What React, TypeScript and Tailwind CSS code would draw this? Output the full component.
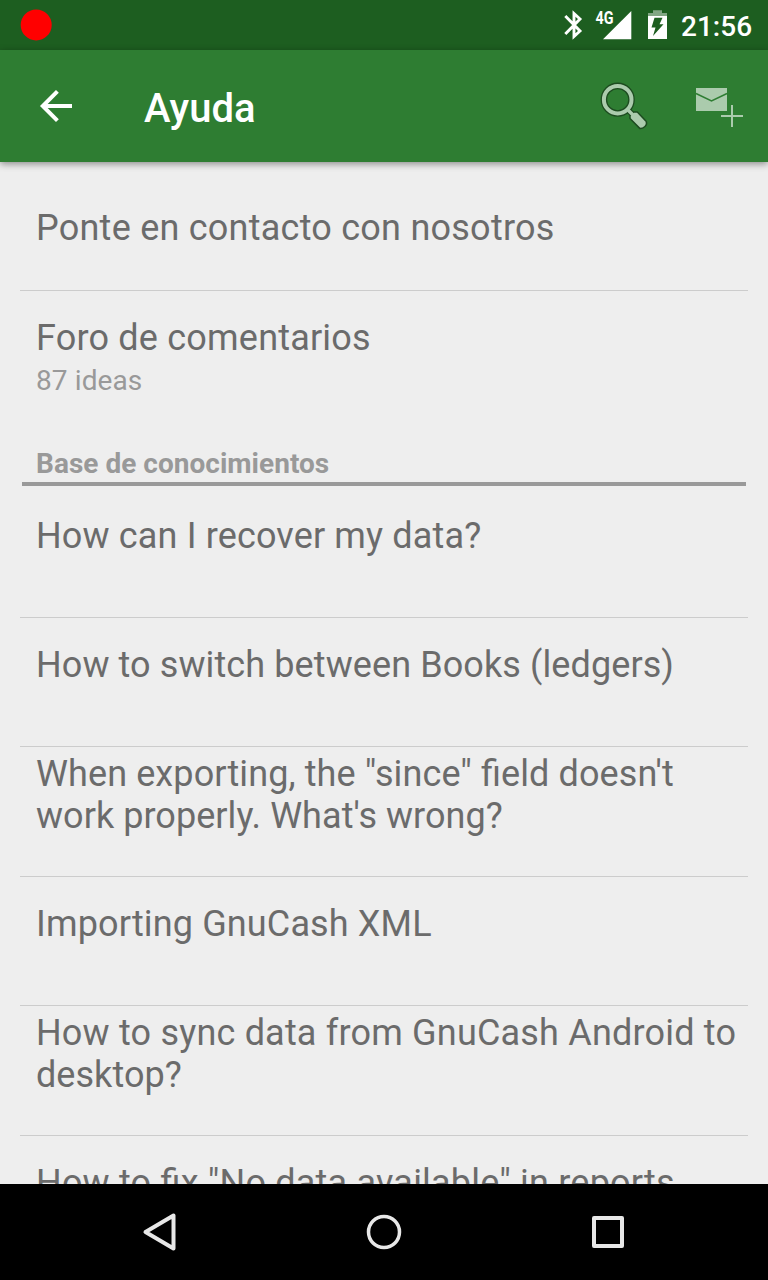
import type { ReactNode } from "react";

function StatusBar() {
  return (
    <div className="flex h-[50px] shrink-0 items-center bg-[#1d5e20] text-white">
      <svg className="ml-5 h-8 w-8" viewBox="0 0 32 32">
        <circle cx="16.200" cy="15.900" r="15.500" fill="#ff0000" />
      </svg>
      <div className="flex-1" />
      <svg className="h-[50px] w-[114px] shrink-0" viewBox="560 0 114 50">
        <path d="M565.300 16 580 31 574 36.500V13.500L580 19 565.300 34" fill="none" stroke="#fff" strokeWidth="2.900" />
        <text x="595.500" y="24" fill="#fff" fontFamily="Roboto, sans-serif" fontSize="17.500" fontWeight="700" textLength="18" lengthAdjust="spacingAndGlyphs">4G</text>
        <path d="M603 39.300 631.300 11V39.300Z" fill="#fff" />
        <path d="M653 10.300H662V13H667V16H648V13H653Z" fill="#fff" fillOpacity=".45" />
        <path d="M648 16H667V39H648Z" fill="#fff" />
        <path d="M654.500 17.800H662.500L659.500 24.200H663.500L653 36L655.500 27.500H651.500Z" fill="#1d5e20" />
      </svg>
      <div className="w-[94px] shrink-0 pl-[7px] pt-[3px] text-[28px] leading-8 font-medium">21:56</div>
    </div>
  );
}

function AppBar() {
  return (
    <header className="z-10 flex h-28 shrink-0 items-center bg-[#2e7d32] text-white shadow-[0_2px_7px_rgba(0,0,0,0.42)]">
      <svg className="ml-8 h-12 w-12" viewBox="0 0 48 48" fill="none" stroke="#fff" strokeWidth="4">
        <path d="M40 24H10M25.400 9.400 10.800 24l14.600 14.600" />
      </svg>
      <h1 className="ml-16 flex-1 pt-1.5 text-[40px] leading-[48px] font-medium">Ayuda</h1>
      <svg className="h-28 w-[188px]" viewBox="580 50 188 112">
        <g strokeLinecap="round" strokeLinejoin="round">
          <circle cx="617.700" cy="99.700" r="13.800" fill="none" stroke="#1d4c20" strokeWidth="6.600" />
          <path d="M627.500 109.500 632 114" stroke="#1d4c20" strokeWidth="6" />
          <path d="M630 115.700 633.800 112 637.300 112 646.300 121.500Q647.300 124.500 645 126.500T640 128.600L630 118.500Z" fill="#abcbad" stroke="#1d4c20" strokeWidth="1.500" />
          <circle cx="617.700" cy="99.700" r="13.800" fill="none" stroke="#abcbad" strokeWidth="4" />
          <path d="M628 110 633 115" stroke="#abcbad" strokeWidth="3.500" />
        </g>
        <path d="M696 88H727V111H696Z" fill="#abcbad" />
        <path d="M696 93.500 711.500 101 727 93.500" fill="none" stroke="#2e7d32" strokeWidth="1.500" />
        <path d="M721 116H743M732 105V127" stroke="#abcbad" strokeWidth="2" />
      </svg>
    </header>
  );
}

function Row({ children, className }: { children: ReactNode; className: string }) {
  return (
    <li className={`mx-5 shrink-0 border-b border-[#cccccc] pl-4 text-[36px] leading-[42px] text-[#6b6b6b] [font-feature-settings:'liga'_1] ${className}`}>
      {children}
    </li>
  );
}

export default function App() {
  return (
    <div className="flex h-[1280px] w-[768px] flex-col overflow-hidden bg-[#eeeeee] font-['Roboto',sans-serif]">
      <StatusBar />
      <AppBar />
      <main className="min-h-0 flex-1 overflow-hidden">
        <ul className="flex flex-col">
          <Row className="h-[129px] pt-[45px] tracking-[0.24px]">Ponte en contacto con nosotros</Row>
          <Row className="h-[144px] border-b-0 pt-[26px] tracking-[0.2px]">
            Foro de comentarios
            <div className="pt-[5px] text-[28px] leading-[34px] tracking-[0.1px] text-[#999999]">87 ideas</div>
          </Row>
          <li className="mx-[22px] h-[51px] shrink-0 border-b-4 border-[#999999] pl-3.5 pt-[12px] text-[28px] leading-[33px] font-bold tracking-[0.02px] text-[#999999]">
            Base de conocimientos
          </li>
          <Row className="h-[132px] pt-[29px] tracking-[0.15px]">How can I recover my data?</Row>
          <Row className="h-[129px] pt-[26px] tracking-[0.1px]">How to switch between Books (ledgers)</Row>
          <Row className="h-[130px] pt-[6px] tracking-[0.1px]">
            When exporting, the "since" field doesn't <span className="tracking-[0.05px]">work properly. What's wrong?</span>
          </Row>
          <Row className="h-[129px] pt-[26px] tracking-[0.14px]">Importing GnuCash XML</Row>
          <Row className="h-[130px] pt-[6px] tracking-[0.19px]">
            How to sync data from GnuCash Android to<br /><span className="tracking-[0.05px]">desktop?</span>
          </Row>
          <Row className="h-[129px] pt-[26px] tracking-[0.2px]">How to fix "No data available" in reports</Row>
        </ul>
      </main>
      <nav className="flex h-24 shrink-0 items-center justify-center gap-44 bg-black">
        <svg className="h-12 w-12" viewBox="0 0 48 48" fill="none" stroke="#e8e8e8" strokeWidth="4" strokeLinejoin="round">
          <path d="M9.500 24 37.500 7.500V40.500Z" />
        </svg>
        <svg className="h-12 w-12" viewBox="0 0 48 48" fill="none" stroke="#e8e8e8" strokeWidth="3.500">
          <circle cx="24" cy="24" r="15.500" />
        </svg>
        <svg className="h-12 w-12" viewBox="0 0 48 48" fill="none" stroke="#e8e8e8" strokeWidth="4" strokeLinejoin="round">
          <path d="M10 10H38V38H10Z" />
        </svg>
      </nav>
    </div>
  );
}
